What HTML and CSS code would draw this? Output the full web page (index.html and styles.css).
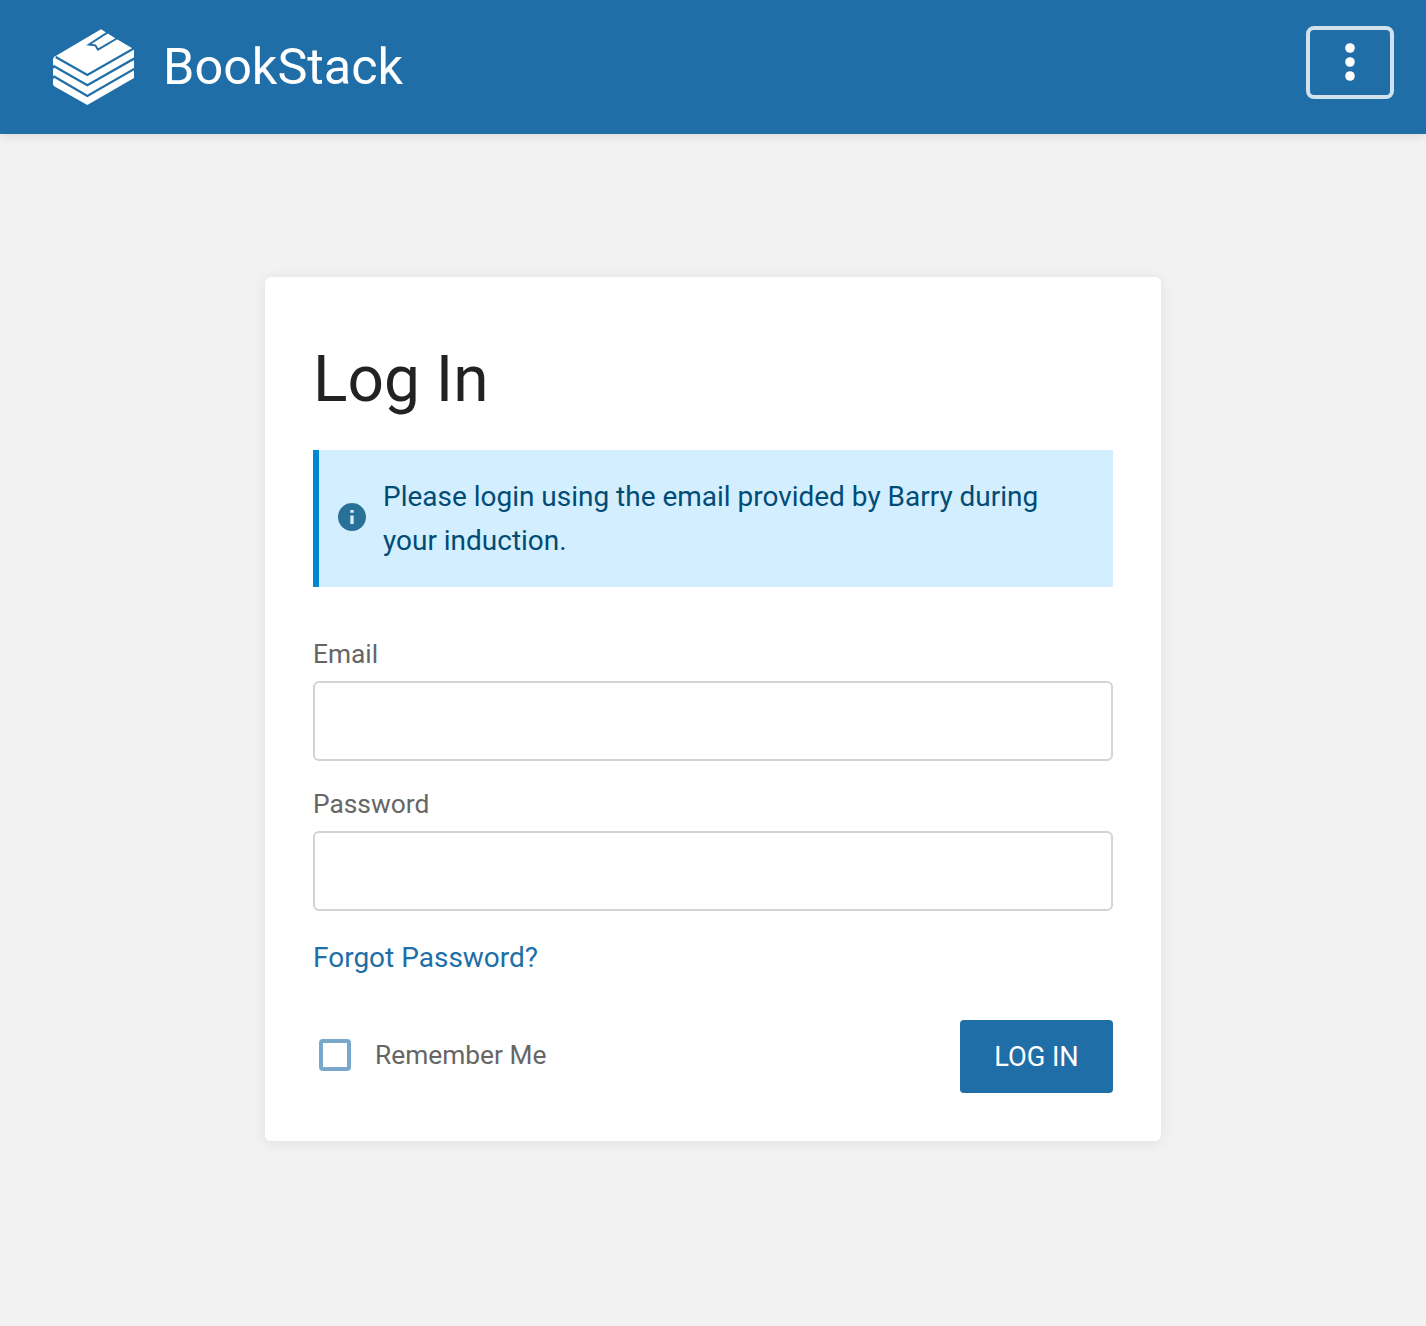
FILE: index.html
```html
<!DOCTYPE html>
<html lang="en">
<head>
<meta charset="utf-8">
<title>BookStack</title>
<link rel="stylesheet" href="styles.css">
</head>
<body>
<header class="header">
  <a class="logo">
    <svg class="logo-image" viewBox="39 26 246 229" fill="#fff">
      <path d="M183 27 43 109Q39 112 39 117V132Q40 137 45 139Q40 142 39 147V163Q40 168 45 170Q40 173 39 178V192Q40 197 45 199L142 254 282 173V87L226 54Z"/>
      <g fill="none" stroke="#206ea7" stroke-width="6.800">
        <path d="M47 110 142 164 284 83"/>
        <path d="M41 137 142 195 284 114"/>
        <path d="M41 168 142 227 284 145"/>
        <path stroke-width="6" d="M203 36 147 72.500 166 75 174 88 233 53"/>
      </g>
    </svg>
    <span class="logo-text">BookStack</span>
  </a>
  <button class="menu-toggle" aria-label="Expand Header Menu">
    <svg class="dots" viewBox="0 0 10 38" fill="#fff"><circle cx="5" cy="5" r="4.800"/><circle cx="5" cy="19" r="4.800"/><circle cx="5" cy="33" r="4.800"/></svg>
  </button>
</header>
<main class="card">
  <h1 class="title">Log In</h1>
  <div class="callout">
    <svg class="info" viewBox="2 2 20 20" fill="#015380"><path d="M12 2C6.480 2 2 6.480 2 12s4.480 10 10 10 10-4.480 10-10S17.520 2 12 2zm1.200 15h-2.400v-6h2.400v6zm0-8h-2.400V7h2.400v2z"/></svg>
    <p class="callout-text">Please login using the email provided by Barry during your induction.</p>
  </div>
  <form class="form">
    <label class="label" for="email">Email</label>
    <input class="input" id="email" type="text">
    <label class="label" for="password">Password</label>
    <input class="input" id="password" type="password">
    <a class="forgot">Forgot Password?</a>
    <div class="actions">
      <label class="remember"><span class="checkbox"></span><span>Remember Me</span></label>
      <button class="submit" type="button">Log In</button>
    </div>
  </form>
</main>
</body>
</html>
```

FILE: styles.css
```css
* {
  box-sizing: border-box;
}

body {
  margin: 0;
  min-height: 1326px;
  background: #f2f2f2;
  font-family: Roboto, "Liberation Sans", sans-serif;
  font-size: 28px;
  color: #444;
}

.header {
  display: flex;
  justify-content: space-between;
  align-items: flex-start;
  height: 134px;
  padding: 26px 32px 0 53px;
  background: #206ea7;
  box-shadow: 0 2px 10px rgba(0, 0, 0, 0.1);
}

.logo {
  display: flex;
  align-items: center;
  gap: 28px;
  height: 82px;
  color: #fff;
}

.logo-image {
  width: 82px;
  height: 76.300px;
}

.logo-text {
  font-size: 50.400px;
  line-height: 80px;
}

.menu-toggle {
  display: flex;
  align-items: center;
  justify-content: center;
  width: 88px;
  height: 73px;
  padding: 0 0 2px;
  border: 4px solid rgba(255, 255, 255, 0.8);
  border-radius: 8px;
  background: none;
}

.dots {
  width: 10px;
  height: 38px;
}

.card {
  width: 896px;
  height: 864px;
  margin: 143px auto 0;
  padding: 64px 48px 48px;
  border-radius: 6px;
  background: #fff;
  box-shadow: 0 2px 14px rgba(0, 0, 0, 0.08);
}

.title {
  margin: 0;
  font-size: 64px;
  font-weight: 400;
  line-height: 77px;
  color: #222;
}

.callout {
  display: flex;
  align-items: center;
  height: 137px;
  margin-top: 32px;
  padding: 0 40px 0 19px;
  border-left: 6px solid #0288d1;
  background: #d3eeff;
  color: #014c75;
}

.info {
  flex: none;
  width: 28px;
  height: 28px;
  margin: 0 17px 3px 0;
  opacity: 0.8;
}

.callout-text {
  margin: 0;
  font-size: 27.970px;
  line-height: 44px;
}

.form {
  display: flex;
  flex-direction: column;
  margin-top: 50px;
}

.label {
  height: 44px;
  font-size: 26.320px;
  line-height: 34px;
  color: #666;
}

.input {
  width: 100%;
  height: 80px;
  margin: 0 0 26px;
  padding: 0 16px;
  border: 2px solid #d4d4d4;
  border-radius: 6px;
  background: #fff;
  font: inherit;
}

.forgot {
  margin-top: -1px;
  line-height: 44px;
  color: #206ea7;
}

.actions {
  display: flex;
  justify-content: space-between;
  align-items: center;
  height: 73px;
  margin-top: 40px;
}

.remember {
  display: flex;
  align-items: center;
  gap: 24px;
  padding: 0 0 3px 6px;
  font-size: 26.320px;
  color: #666;
}

.checkbox {
  width: 32px;
  height: 32px;
  border: 4px solid #79a8ca;
  border-radius: 4px;
}

.submit {
  width: 153px;
  height: 73px;
  padding: 0;
  border: 0;
  border-radius: 4px;
  background: #206ea7;
  color: #fff;
  font: 400 27.200px Roboto, "Liberation Sans", sans-serif;
  text-transform: uppercase;
}
```
